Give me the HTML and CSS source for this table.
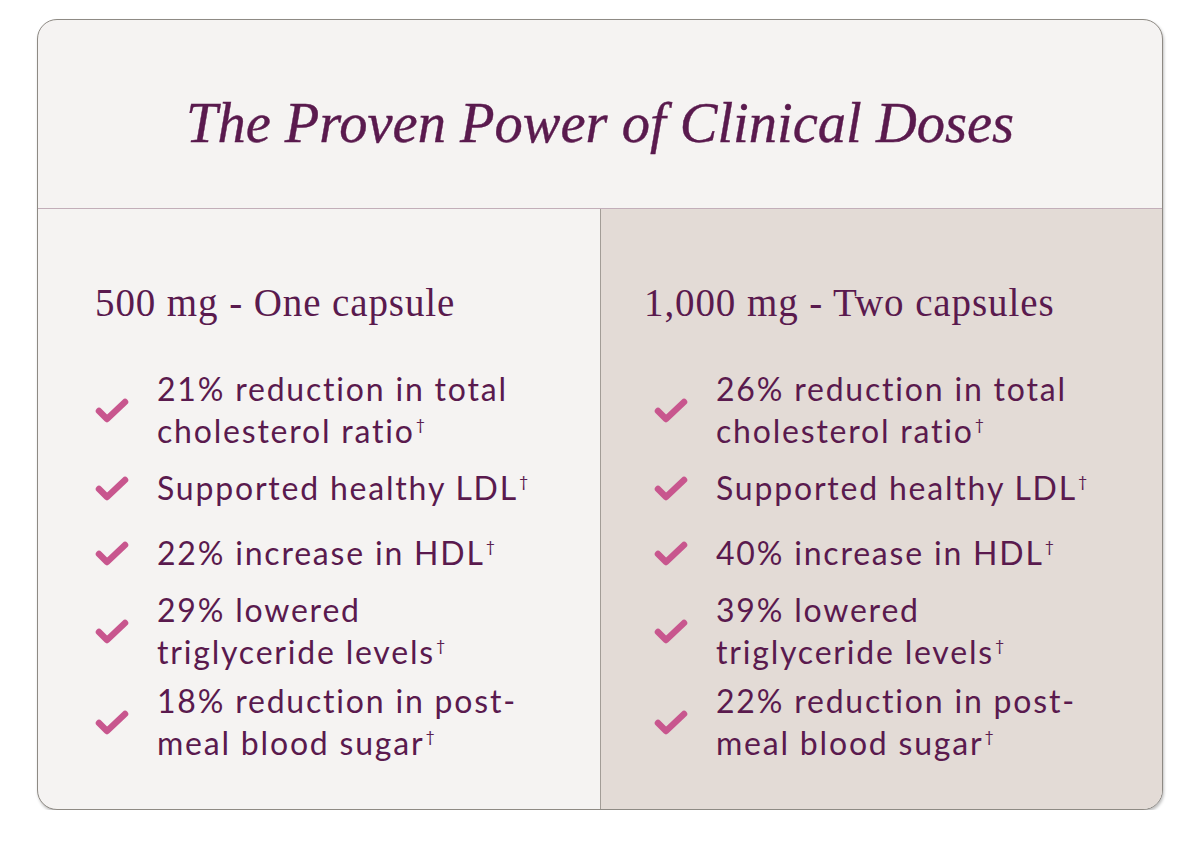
FILE: index.html
```html
<!DOCTYPE html>
<html lang="en">
<head>
<meta charset="utf-8">
<title>The Proven Power of Clinical Doses</title>
<link rel="stylesheet" href="styles.css">
</head>
<body>
<section class="card">
  <header class="card-header">
    <h1 class="title">The Proven Power of Clinical Doses</h1>
  </header>
  <div class="columns">
    <div class="col">
      <h2 class="dose">500 mg - One capsule</h2>
      <ul class="list">
        <li class="item"><svg class="check" viewBox="0 0 34 27"><path d="M4 14 L12 22 L30 5"/></svg><span class="txt">21% reduction in total cholesterol ratio<sup>†</sup></span></li>
        <li class="item"><svg class="check" viewBox="0 0 34 27"><path d="M4 14 L12 22 L30 5"/></svg><span class="txt">Supported healthy LDL<sup>†</sup></span></li>
        <li class="item"><svg class="check" viewBox="0 0 34 27"><path d="M4 14 L12 22 L30 5"/></svg><span class="txt">22% increase in HDL<sup>†</sup></span></li>
        <li class="item"><svg class="check" viewBox="0 0 34 27"><path d="M4 14 L12 22 L30 5"/></svg><span class="txt">29% lowered triglyceride levels<sup>†</sup></span></li>
        <li class="item"><svg class="check" viewBox="0 0 34 27"><path d="M4 14 L12 22 L30 5"/></svg><span class="txt">18% reduction in post-meal blood sugar<sup>†</sup></span></li>
      </ul>
    </div>
    <div class="col col-alt">
      <h2 class="dose dose-alt">1,000 mg - Two capsules</h2>
      <ul class="list">
        <li class="item"><svg class="check" viewBox="0 0 34 27"><path d="M4 14 L12 22 L30 5"/></svg><span class="txt">26% reduction in total cholesterol ratio<sup>†</sup></span></li>
        <li class="item"><svg class="check" viewBox="0 0 34 27"><path d="M4 14 L12 22 L30 5"/></svg><span class="txt">Supported healthy LDL<sup>†</sup></span></li>
        <li class="item"><svg class="check" viewBox="0 0 34 27"><path d="M4 14 L12 22 L30 5"/></svg><span class="txt">40% increase in HDL<sup>†</sup></span></li>
        <li class="item"><svg class="check" viewBox="0 0 34 27"><path d="M4 14 L12 22 L30 5"/></svg><span class="txt">39% lowered triglyceride levels<sup>†</sup></span></li>
        <li class="item"><svg class="check" viewBox="0 0 34 27"><path d="M4 14 L12 22 L30 5"/></svg><span class="txt">22% reduction in post-meal blood sugar<sup>†</sup></span></li>
      </ul>
    </div>
  </div>
</section>
</body>
</html>
```

FILE: styles.css
```css
html, body {
  margin: 0;
  padding: 0;
  background: #ffffff;
}

body {
  padding: 19px 0 0 37px;
  font-family: "Lato", "Liberation Sans", sans-serif;
  color: #5a1a4e;
}

.card {
  width: 1126px;
  height: 791px;
  box-sizing: border-box;
  border: 1px solid #8e8a84;
  border-radius: 20px;
  background: #f5f3f2;
  overflow: hidden;
  display: flex;
  flex-direction: column;
  box-shadow: 1px 2px 3px rgba(0, 0, 0, 0.25);
}

.card-header {
  height: 189px;
  box-sizing: border-box;
  border-bottom: 1px solid #c2aeb9;
  display: flex;
  align-items: center;
  justify-content: center;
  flex-shrink: 0;
}

.title {
  margin: 0;
  font-family: "Liberation Serif", serif;
  font-style: italic;
  font-weight: 400;
  font-size: 56.5px;
  color: #5a1a4e;
  padding-top: 18px;
  -webkit-text-stroke: 0.4px #5a1a4e;
}

.columns {
  flex: 1;
  display: grid;
  grid-template-columns: 562px 1fr;
}

.col {
  padding: 72px 0 0 57px;
}

.col-alt {
  background: #e3dbd6;
  border-left: 1px solid #a39d97;
  padding-left: 53px;
}

.dose {
  margin: 0;
  font-family: "Liberation Serif", serif;
  font-weight: 400;
  font-size: 39px;
  line-height: 44px;
  letter-spacing: 0.9px;
  color: #5a1a4e;
}

.dose-alt {
  margin-left: -10px;
}

.list {
  list-style: none;
  margin: 43px 0 0;
  padding: 0;
  display: flex;
  flex-direction: column;
  gap: 7px;
}

.item {
  display: flex;
  align-items: center;
  min-height: 58px;
}

.check {
  width: 34px;
  height: 27px;
  flex-shrink: 0;
  margin-right: 28px;
  fill: none;
  stroke: #c8568e;
  stroke-width: 6.5;
  stroke-linecap: round;
  stroke-linejoin: round;
}

.txt {
  font-size: 32px;
  line-height: 42px;
  letter-spacing: 1.8px;
  max-width: 380px;
}

.txt sup {
  font-size: 16px;
  line-height: 0;
  vertical-align: 0;
  position: relative;
  top: -13px;
  margin-left: 1px;
  letter-spacing: 0;
}
```
